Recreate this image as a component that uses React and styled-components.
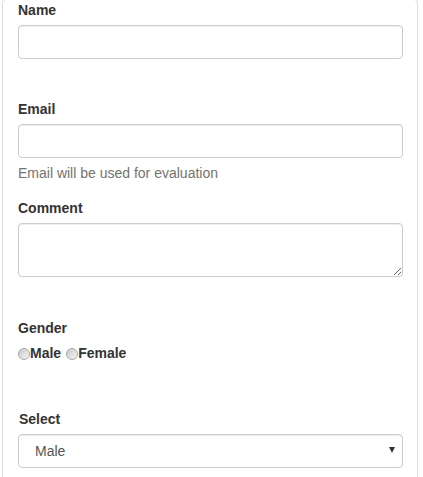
import React from "react";
import styled, { createGlobalStyle } from "styled-components";

const Global = createGlobalStyle`
  html, body { margin: 0; padding: 0; background: #fff; }
  body {
    font-family: "Liberation Sans", Arial, Helvetica, sans-serif;
    font-size: 14px;
    line-height: 20px;
    color: #333;
  }
  * { box-sizing: border-box; }
`;

const Card = styled.div`
  margin: -1px 0 0 2px;
  width: 416px;
  min-height: 520px;
  border: 1px solid #ddd;
  border-radius: 4px;
  padding: 0 15px;
  background: #fff;
`;

const Group = styled.div`
  display: flex;
  flex-direction: column;
  align-items: flex-start;
  margin-bottom: ${(p) => p.$mb}px;
`;

const Label = styled.label`
  display: block;
  font-weight: bold;
  font-size: 14px;
  line-height: 20px;
  margin-bottom: 5px;
  padding-left: ${(p) => p.$indent || 0}px;
`;

const Input = styled.input`
  display: block;
  width: 385px;
  height: 34px;
  padding: 6px 12px;
  font: 14px/20px "Liberation Sans", Arial, sans-serif;
  color: #555;
  background: #fff;
  border: 1px solid #ccc;
  border-radius: 4px;
  box-shadow: inset 0 1px 1px rgba(0, 0, 0, 0.075);
  outline: none;
`;

const TextArea = styled.textarea`
  display: block;
  width: 385px;
  height: 54px;
  padding: 6px 12px;
  font: 14px/20px "Liberation Sans", Arial, sans-serif;
  color: #555;
  border: 1px solid #ccc;
  border-radius: 4px;
  box-shadow: inset 0 1px 1px rgba(0, 0, 0, 0.075);
  outline: none;
  resize: vertical;
`;

const Help = styled.span`
  display: block;
  margin-top: 5px;
  color: #737373;
  font-size: 14px;
  line-height: 20px;
`;

const RadioRow = styled.div`
  display: flex;
  align-items: center;
  height: 20px;
  gap: 5px;
`;

const RadioLabel = styled.label`
  display: flex;
  align-items: center;
  font-weight: bold;
`;

const Radio = styled.input.attrs({ type: "radio" })`
  appearance: none;
  -webkit-appearance: none;
  width: 12px;
  height: 12px;
  margin: 1px 0 0 0;
  border-radius: 50%;
  border: 1px solid #a9a9a9;
  background: linear-gradient(135deg, #c8c8c8 0%, #e2e2e2 55%, #f4f4f4 100%);
`;

const SelectWrap = styled.div`
  position: relative;
  width: 385px;
`;

const Select = styled.select`
  appearance: none;
  -webkit-appearance: none;
  display: block;
  width: 385px;
  height: 34px;
  padding: 6px 24px 6px 16px;
  font: 14px/20px "Liberation Sans", Arial, sans-serif;
  color: #555;
  background: #fff;
  border: 1px solid #ccc;
  border-radius: 4px;
  box-shadow: inset 0 1px 1px rgba(0, 0, 0, 0.075);
  outline: none;
`;

const Arrow = styled.span`
  position: absolute;
  right: 8px;
  top: 13px;
  width: 0;
  height: 0;
  border-left: 3.5px solid transparent;
  border-right: 3.5px solid transparent;
  border-top: 6px solid #333;
  pointer-events: none;
`;

export default function App() {
  return (
    <>
      <Global />
      <Card>
        <Group $mb={40}>
          <Label>Name</Label>
          <Input type="text" />
        </Group>
        <Group $mb={15}>
          <Label>Email</Label>
          <Input type="email" />
          <Help>Email will be used for evaluation</Help>
        </Group>
        <Group $mb={41}>
          <Label>Comment</Label>
          <TextArea rows={2} />
        </Group>
        <Group $mb={46}>
          <Label>Gender</Label>
          <RadioRow>
            <RadioLabel>
              <Radio name="gender" />
              Male
            </RadioLabel>
            <RadioLabel>
              <Radio name="gender" />
              Female
            </RadioLabel>
          </RadioRow>
        </Group>
        <Group $mb={20}>
          <Label $indent={1}>Select</Label>
          <SelectWrap>
            <Select defaultValue="Male">
              <option>Male</option>
              <option>Female</option>
            </Select>
            <Arrow />
          </SelectWrap>
        </Group>
      </Card>
    </>
  );
}
